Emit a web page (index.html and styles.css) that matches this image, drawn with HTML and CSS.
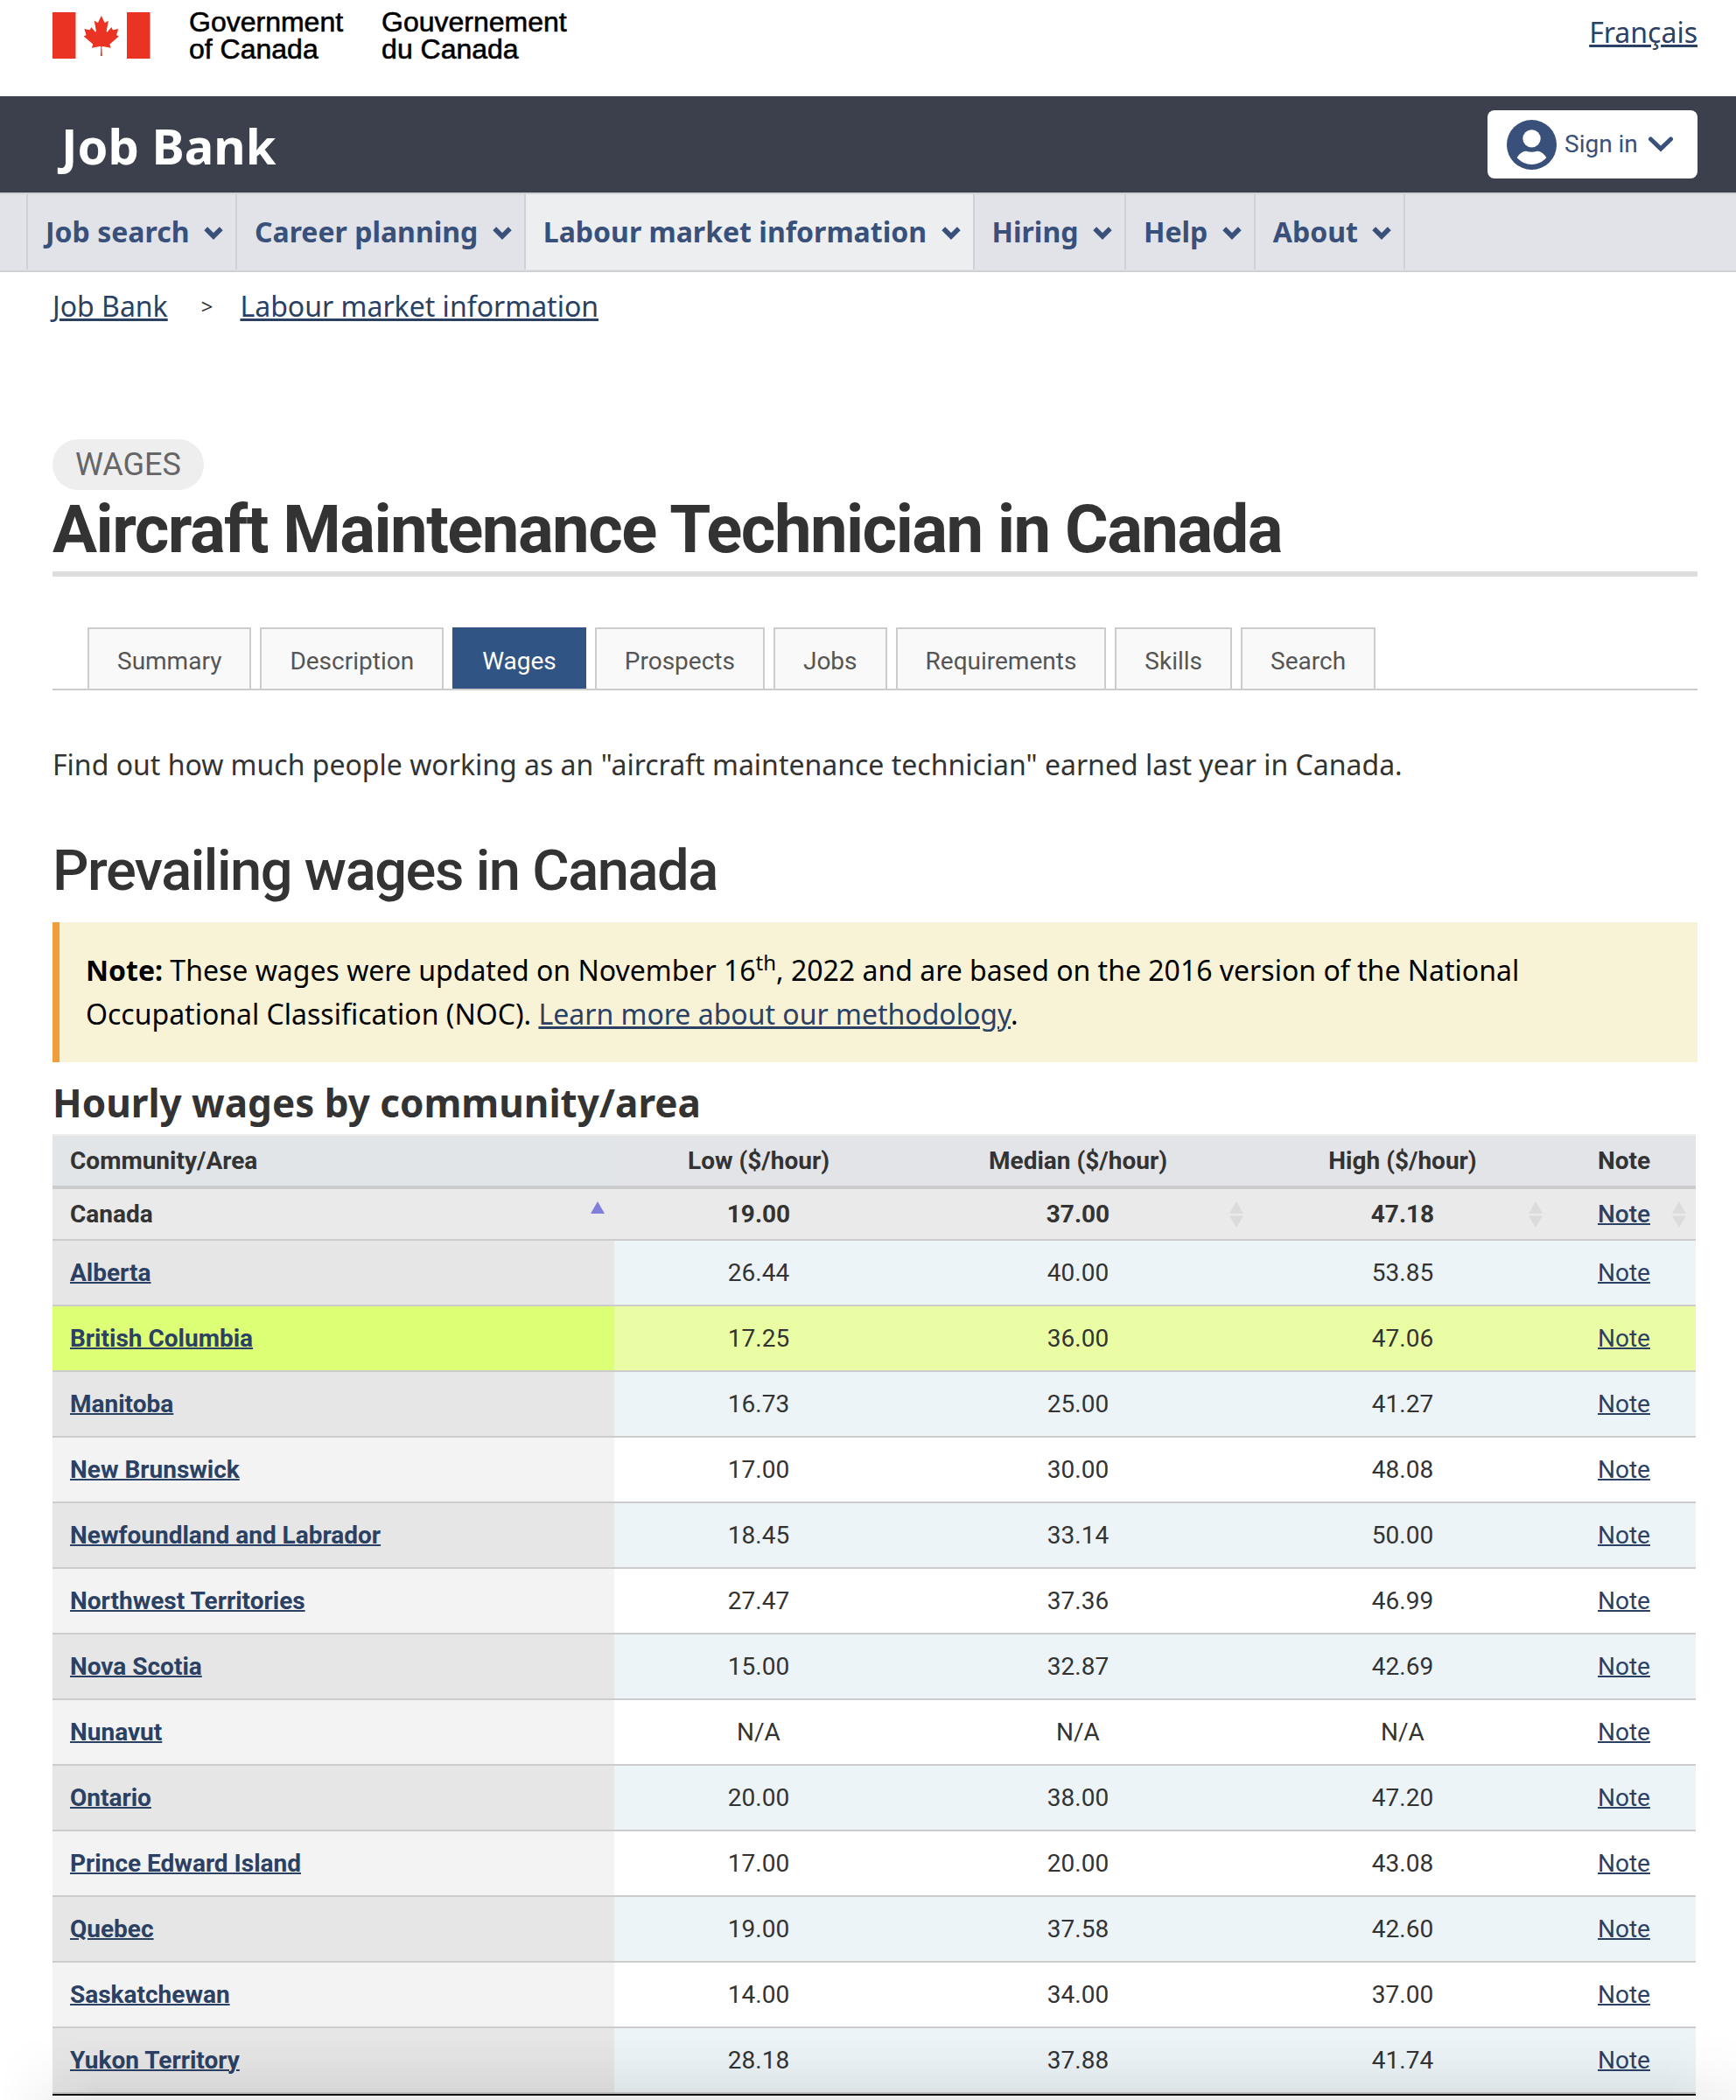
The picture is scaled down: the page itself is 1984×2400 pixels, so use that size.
FILE: index.html
```html
<!DOCTYPE html>
<html lang="en">
<head>
<meta charset="utf-8">
<title>Aircraft Maintenance Technician in Canada | Wages - Job Bank</title>
<link rel="stylesheet" href="styles.css">
</head>
<body>
<svg class="defs" width="0" height="0" aria-hidden="true">
  <symbol id="chev" viewBox="0 0 22 16"><path d="M2.200 3.200 11 12 19.800 3.200" fill="none" stroke="currentColor" stroke-width="5.500"/></symbol>
  <symbol id="sort" viewBox="0 0 16 30"><path d="M8 0 16 14H0zM0 16.500H16L8 30z" fill="#dcdcdc"/></symbol>
</svg>
<header>
  <div class="brand">
    <svg class="flag" viewBox="0 0 112 53" aria-hidden="true">
      <path d="M0 0H26.500V53H0zM85 0H111.500V53H85z" fill="#eb3323"/>
      <path transform="translate(55.800 26.800) scale(.0108 .0114)" fill="#eb3323" d="m-90 2030 45-863a95 95 0 0 0-111-98l-859 151 116-320a65 65 0 0 0-20-73l-941-762 212-99a65 65 0 0 0 34-79l-186-572 542 115a65 65 0 0 0 73-38l105-247 423 454a65 65 0 0 0 111-57l-204-1052 327 189a65 65 0 0 0 91-27l332-652 332 652a65 65 0 0 0 91 27l327-189-204 1052a65 65 0 0 0 111 57l423-454 105 247a65 65 0 0 0 73 38l542-115-186 572a65 65 0 0 0 34 79l212 99-941 762a65 65 0 0 0-20 73l116 320-859-151a95 95 0 0 0-111 98l45 863z"/>
    </svg>
    <div class="gov">Government<br>of Canada</div>
    <div class="gov">Gouvernement<br>du Canada</div>
    <a class="lang" href="#">Français</a>
  </div>
  <div class="bar">
    <span class="site">Job Bank</span>
    <button class="signin">
      <svg class="user" viewBox="0 0 56 56" aria-hidden="true"><circle cx="28" cy="28" r="28" fill="#39507a"/><circle cx="28" cy="21" r="10" fill="#fff"/><path d="M11.500 42.500C14 37.500 19 35 22 35.200C26 36.500 30 36.500 34 35.200C37 35 42 37.500 44.500 42.500C40 47.500 34 50 28 50S16 47.500 11.500 42.500z" fill="#fff"/></svg>
      <span>Sign in</span>
      <svg class="signin-chev" viewBox="0 0 28 18" aria-hidden="true"><path d="M2.500 3 14 14 25.500 3" fill="none" stroke="#39507a" stroke-width="5"  stroke-linecap="round"/></svg>
    </button>
  </div>
  <nav class="menu">
    <a href="#">Job search<svg><use href="#chev"/></svg></a>
    <a href="#">Career planning<svg><use href="#chev"/></svg></a>
    <a href="#" class="current">Labour market information<svg><use href="#chev"/></svg></a>
    <a href="#">Hiring<svg><use href="#chev"/></svg></a>
    <a href="#">Help<svg><use href="#chev"/></svg></a>
    <a href="#">About<svg><use href="#chev"/></svg></a>
  </nav>
</header>
<main>
  <div class="crumbs"><a href="#">Job Bank</a><span class="sep">&gt;</span><a href="#">Labour market information</a></div>
  <div class="pill">WAGES</div>
  <h1>Aircraft Maintenance Technician in Canada</h1>
  <div class="tabs">
    <a href="#">Summary</a><a href="#">Description</a><a href="#" class="active">Wages</a><a href="#">Prospects</a><a href="#">Jobs</a><a href="#">Requirements</a><a href="#">Skills</a><a href="#">Search</a>
  </div>
  <p class="intro">Find out how much people working as an "aircraft maintenance technician" earned last year in Canada.</p>
  <h2>Prevailing wages in Canada</h2>
  <div class="note"><strong>Note:</strong> These wages were updated on November 16<sup>th</sup>, 2022 and are based on the 2016 version of the National Occupational Classification (NOC). <a href="#">Learn more about our methodology</a>.</div>
  <h3>Hourly wages by community/area</h3>
  <table>
    <colgroup><col class="c1"><col class="c2"><col class="c3"><col class="c4"><col class="c5"></colgroup>
    <thead>
      <tr><th>Community/Area</th><th>Low ($/hour)</th><th>Median ($/hour)</th><th>High ($/hour)</th><th>Note</th></tr>
      <tr class="total"><th>Canada<svg class="asc" viewBox="0 0 16 14"><path d="M8 0 16 14H0z" fill="#8080dc"/></svg></th><td>19.00</td><td>37.00<svg class="sort"><use href="#sort"/></svg></td><td>47.18<svg class="sort"><use href="#sort"/></svg></td><td><a href="#">Note</a><svg class="sort"><use href="#sort"/></svg></td></tr>
    </thead>
    <tbody>
      <tr><th><a href="#">Alberta</a></th><td>26.44</td><td>40.00</td><td>53.85</td><td><a href="#">Note</a></td></tr>
      <tr class="hl"><th><a href="#">British Columbia</a></th><td>17.25</td><td>36.00</td><td>47.06</td><td><a href="#">Note</a></td></tr>
      <tr><th><a href="#">Manitoba</a></th><td>16.73</td><td>25.00</td><td>41.27</td><td><a href="#">Note</a></td></tr>
      <tr><th><a href="#">New Brunswick</a></th><td>17.00</td><td>30.00</td><td>48.08</td><td><a href="#">Note</a></td></tr>
      <tr><th><a href="#">Newfoundland and Labrador</a></th><td>18.45</td><td>33.14</td><td>50.00</td><td><a href="#">Note</a></td></tr>
      <tr><th><a href="#">Northwest Territories</a></th><td>27.47</td><td>37.36</td><td>46.99</td><td><a href="#">Note</a></td></tr>
      <tr><th><a href="#">Nova Scotia</a></th><td>15.00</td><td>32.87</td><td>42.69</td><td><a href="#">Note</a></td></tr>
      <tr><th><a href="#">Nunavut</a></th><td>N/A</td><td>N/A</td><td>N/A</td><td><a href="#">Note</a></td></tr>
      <tr><th><a href="#">Ontario</a></th><td>20.00</td><td>38.00</td><td>47.20</td><td><a href="#">Note</a></td></tr>
      <tr><th><a href="#">Prince Edward Island</a></th><td>17.00</td><td>20.00</td><td>43.08</td><td><a href="#">Note</a></td></tr>
      <tr><th><a href="#">Quebec</a></th><td>19.00</td><td>37.58</td><td>42.60</td><td><a href="#">Note</a></td></tr>
      <tr><th><a href="#">Saskatchewan</a></th><td>14.00</td><td>34.00</td><td>37.00</td><td><a href="#">Note</a></td></tr>
      <tr><th><a href="#">Yukon Territory</a></th><td>28.18</td><td>37.88</td><td>41.74</td><td><a href="#">Note</a></td></tr>
    </tbody>
  </table>
</main>
<div class="shade"></div>
</body>
</html>
```
FILE: styles.css
```css
* { box-sizing: border-box; }
body {
  margin: 0;
  width: 1984px;
  height: 2400px;
  overflow: hidden;
  position: relative;
  background: #fff;
  color: #333;
  font-family: "Noto Sans", sans-serif;
  font-size: 32px;
}
a { color: #2b4164; }
.defs { display: block; position: absolute; }
.brand {
  display: flex;
  align-items: flex-start;
  height: 110px;
  padding: 14px 44px 0 60px;
}
.flag { width: 112px; height: 53px; }
.gov {
  margin: -4px 0 0 44px;
  color: #000;
  font: 32px/31px "Liberation Sans", Arial, sans-serif;
  -webkit-text-stroke: .6px #000;
}
.lang { margin-left: auto; font-size: 32px; line-height: 46px; text-decoration-thickness: 3px; }
.bar {
  display: flex;
  align-items: center;
  justify-content: space-between;
  height: 110px;
  padding: 0 44px 0 70px;
  background: #3b404c;
}
.site { padding-top: 2px; color: #fff; font-size: 56px; font-weight: 700; line-height: 108px; }
.signin {
  display: flex;
  align-items: center;
  width: 240px;
  height: 78px;
  padding: 0 0 0 22px;
  border: 0;
  border-radius: 8px;
  background: #fff;
  color: #39507a;
  font: 28px/40px Roboto, sans-serif;
}
.user { width: 57px; height: 57px; margin-right: 9px; }
.signin-chev { width: 28px; height: 18px; margin-left: 12px; }
.menu {
  display: flex;
  height: 91px;
  padding-left: 30px;
  border-top: 2px solid #d0d1d5;
  border-bottom: 2px solid #d0d1d5;
  background: #e1e3e8;
}
.menu a {
  display: flex;
  align-items: center;
  height: 86px;
  padding: 0 14px 2px 20px;
  border-left: 2px solid #d0d1d5;
  color: #39507a;
  font-weight: 700;
  text-decoration: none;
}
.menu a:last-child { border-right: 2px solid #d0d1d5; }
.menu .current { background: #edeef0; }
.menu svg { width: 22px; height: 16px; margin: 3px 0 0 16.5px; }
main { padding: 0 44px 0 60px; }
.crumbs { display: flex; height: 191px; padding-top: 15px; line-height: 48px; }
.crumbs a, .note a { text-decoration-thickness: 3px; }
.sep { margin: 0 31px 0 38px; font-size: 24px; }
.pill {
  width: 173px;
  height: 58px;
  border-radius: 30px;
  background: #eee;
  color: #666;
  font: 36px/58px Roboto, sans-serif;
  text-align: center;
}
h1 {
  height: 99px;
  margin: 0;
  border-bottom: 6px solid #ddd;
  font: 700 76px/90px Roboto, sans-serif;
  letter-spacing: -.02em;
}
.tabs {
  display: flex;
  gap: 10px;
  height: 72px;
  margin-top: 58px;
  padding-left: 40px;
  border-bottom: 2px solid #ccc;
}
.tabs a {
  padding: 1px 32px 0;
  border: 2px solid #ccc;
  border-bottom: 0;
  background: #f9f9f9;
  color: #555;
  font: 28px/72px Roboto, sans-serif;
  text-decoration: none;
}
.tabs .active { border-color: #305584; background: #305584; color: #fff; }
.intro { margin: 61px 0 0; line-height: 48px; }
h2 { margin: 57px 0 0; font: 500 65px/80px Roboto, sans-serif; letter-spacing: -.0225em; }
.note {
  height: 160px;
  margin-top: 19px;
  padding: 30px 150px 0 30px;
  border-left: 8px solid #f09d3c;
  background: #f8f3d7;
  color: #000;
  line-height: 50px;
}
.note sup { font-size: 75%; line-height: 0; vertical-align: baseline; position: relative; top: -.5em; }
h3 { height: 82px; margin: 0; font: 700 44px/93px "Noto Sans", sans-serif; }
table {
  width: 1878px;
  table-layout: fixed;
  border-collapse: separate;
  border-spacing: 0;
  border-top: 2px solid #eee;
  border-bottom: 2px solid #111;
  font: 28px/40px Roboto, sans-serif;
}
.c1 { width: 642px; } .c2 { width: 330px; } .c3 { width: 400px; } .c4 { width: 342px; } .c5 { width: 164px; }
th, td { position: relative; height: 75px; padding: 0; border-bottom: 2px solid #ccc; text-align: center; }
th:first-child { padding-left: 20px; text-align: left; }
td a, th a { text-decoration-thickness: 2px; }
thead th { height: 61px; border-bottom: 4px solid #ccc; background: #e3e4e8; font-weight: 700; }
thead th:first-child { background: #e1e5e8; }
thead .total th, thead .total td { height: 59px; border-bottom: 2px solid #ccc; background: #eaeaea; font-weight: 700; }
thead .total td:last-child { font-weight: 500; }
.asc { position: absolute; right: 11px; top: 14px; width: 16px; height: 14px; }
.sort { position: absolute; right: 11px; top: 14px; width: 16px; height: 30px; }
tbody th { background: #f3f3f3; font-weight: 700; }
tbody tr:nth-child(odd) th { background: #e6e6e6; }
tbody tr:nth-child(odd) td { background: #ecf4f8; }
tbody .hl th { background: #ddff75; }
tbody .hl td { background: #ebfda4; }
.shade {
  position: absolute;
  left: 0;
  right: 0;
  bottom: 0;
  height: 76px;
  background: linear-gradient(to bottom, rgba(0,0,0,0), rgba(0,0,0,.02) 40%, rgba(0,0,0,.08));
  -webkit-mask-image: linear-gradient(to right, transparent, #000 110px, #000 1900px, rgba(0,0,0,.4));
  mask-image: linear-gradient(to right, transparent, #000 110px, #000 1900px, rgba(0,0,0,.4));
}
```
